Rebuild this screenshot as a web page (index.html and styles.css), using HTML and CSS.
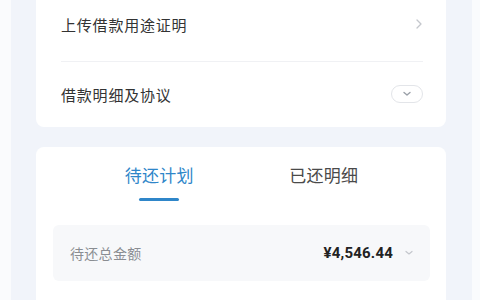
FILE: index.html
```html
<!DOCTYPE html>
<html lang="zh">
<head>
<meta charset="utf-8">
<link rel="stylesheet" href="styles.css">
</head>
<body>
<div class="page">
  <div class="card top">
    <div class="row first">
      <span class="label">上传借款用途证明</span>
      <svg class="chev" width="8" height="12" viewBox="0 0 8 12"><path d="M2 2l4 4-4 4" fill="none" stroke="#c4c7cc" stroke-width="1.3" stroke-linecap="round" stroke-linejoin="round"/></svg>
    </div>
    <div class="divider"></div>
    <div class="row second">
      <span class="label">借款明细及协议</span>
      <span class="pill"><svg width="10" height="6" viewBox="0 0 10 6"><path d="M2 1.5l3 2.5 3-2.5" fill="none" stroke="#9aa0a8" stroke-width="1.4" stroke-linecap="round" stroke-linejoin="round"/></svg></span>
    </div>
  </div>
  <div class="card bottom">
    <div class="tabs">
      <div class="tab active">待还计划<span class="bar"></span></div>
      <div class="tab">已还明细</div>
    </div>
    <div class="summary">
      <span class="slabel">待还总金额</span>
      <span class="amount">¥4,546.44</span>
      <svg class="down" width="10" height="6" viewBox="0 0 10 6"><path d="M2 1.5l3 2.5 3-2.5" fill="none" stroke="#c4c7cc" stroke-width="1.2" stroke-linecap="round" stroke-linejoin="round"/></svg>
    </div>
  </div>
</div>
</body>
</html>
```
FILE: styles.css
```css
html, body {
  margin: 0;
  padding: 0;
  background: #fafbfd;
  font-family: "Noto Sans CJK SC", "Noto Sans", sans-serif;
}
.page {
  margin: 0 8px 0 11px;
  width: 461px;
  height: 300px;
  background: #f1f4fa;
  padding: 0 26px 0 25px;
  box-sizing: border-box;
  overflow: hidden;
}
.card {
  background: #ffffff;
  border-radius: 8px;
}
.top {
  border-radius: 0 0 8px 8px;
  padding: 0 23px 0 25px;
  height: 127px;
  box-sizing: border-box;
}
.row {
  display: flex;
  align-items: center;
  justify-content: space-between;
}
.row.first {
  height: 48px;
  margin-bottom: 13px;
}
.row.second {
  height: 64px;
}
.label {
  font-size: 15px;
  color: #333;
  letter-spacing: 0.8px;
}
.divider {
  height: 1px;
  background: #f0f1f4;
}
.pill {
  width: 30px;
  height: 16px;
  border: 1px solid #e3e5e9;
  border-radius: 9px;
  display: flex;
  align-items: center;
  justify-content: center;
}
.bottom {
  margin-top: 20px;
  height: 200px;
  padding: 0 16px 0 17px;
}
.tabs {
  display: flex;
  height: 78px;
  padding: 0 24px;
}
.tab {
  flex: 1;
  text-align: center;
  font-size: 17px;
  color: #4a4a4a;
  padding-top: 15px;
  letter-spacing: 0.3px;
}
.tab.active {
  color: #2f86c9;
}
.tab.active .bar {
  display: block;
  width: 40px;
  height: 3px;
  border-radius: 2px;
  background: #2f86c9;
  margin: 11px auto 0;
}
.summary {
  background: #f7f8fa;
  border-radius: 6px;
  height: 56px;
  display: flex;
  align-items: center;
  padding: 0 16px 0 17px;
}
.slabel {
  font-size: 14px;
  color: #8a8d92;
  flex: 1;
  letter-spacing: 0.3px;
}
.amount {
  font-family: Roboto, sans-serif;
  font-weight: 700;
  font-size: 15px;
  color: #222;
  margin-right: 11px;
  letter-spacing: 0.2px;
}
```
